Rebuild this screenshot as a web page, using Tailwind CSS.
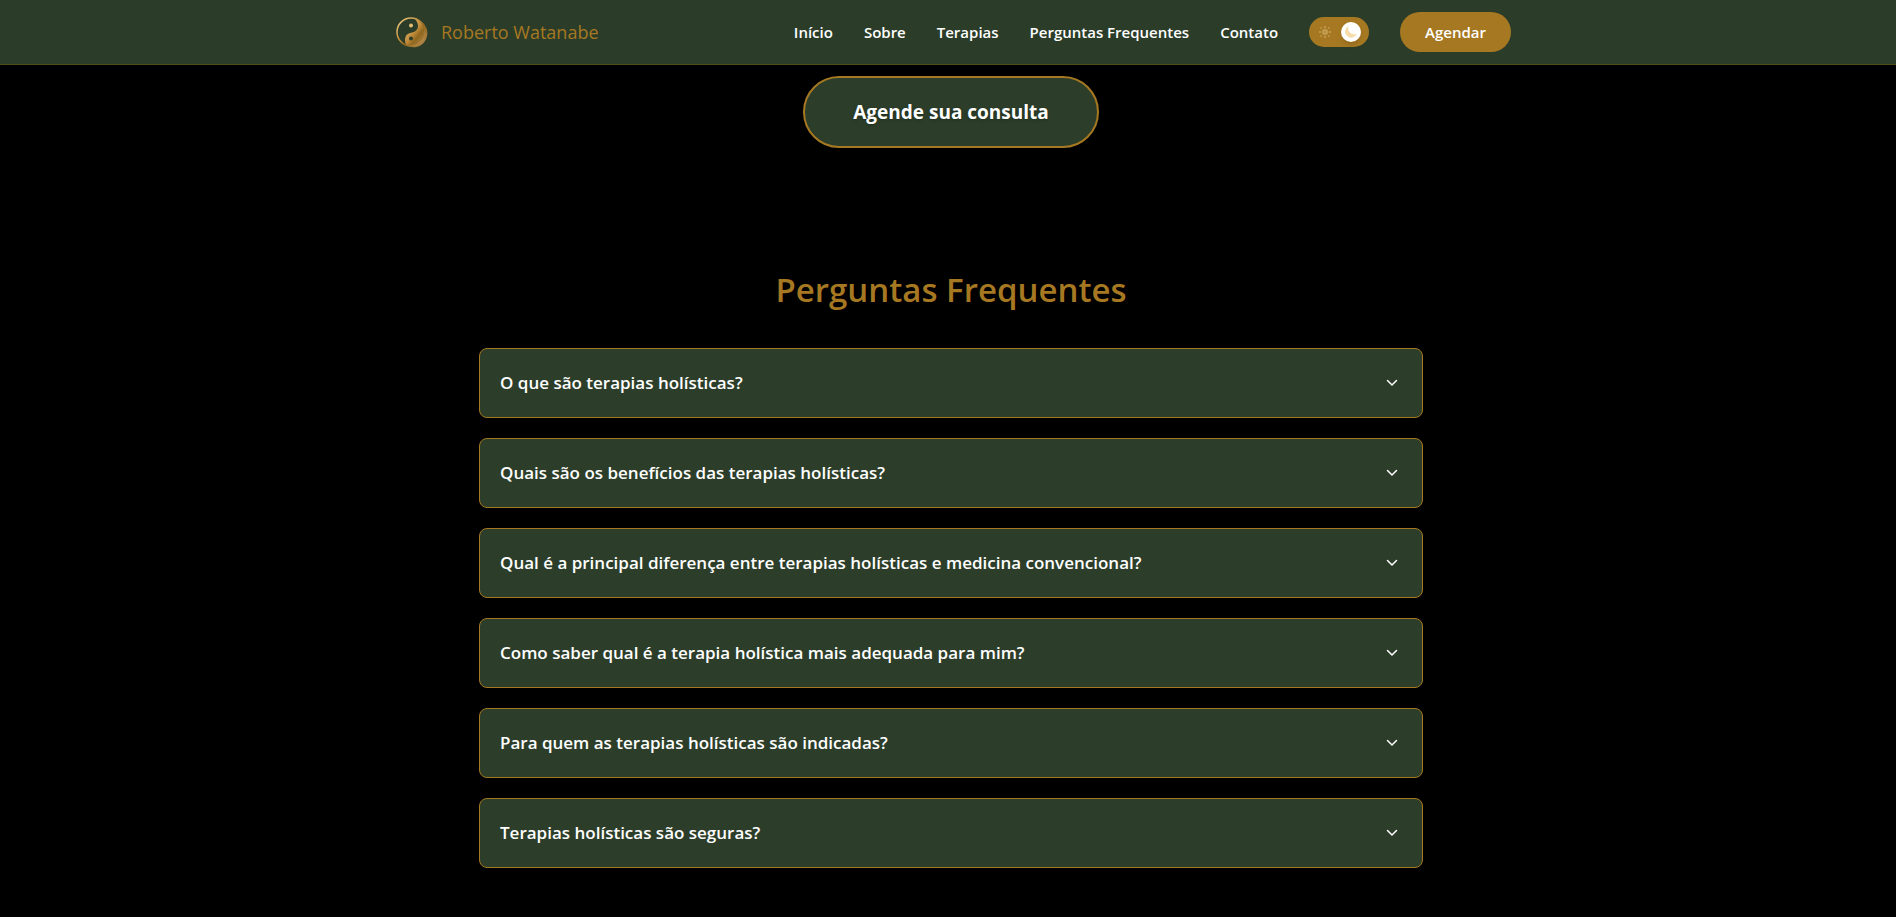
<!DOCTYPE html>
<html lang="pt-BR">
<head>
    <meta charset="UTF-8">
    <meta name="viewport" content="width=device-width, initial-scale=1.0">
    <title>Roberto Watanabe - Terapias Holísticas</title>
    <script src="https://cdn.jsdelivr.net/npm/@tailwindcss/browser@4"></script>
</head>
<body class="bg-black text-white font-['Segoe_UI','Open_Sans',sans-serif] overflow-x-hidden">

    <!-- Cabeçalho -->
    <header class="fixed inset-x-0 top-0 z-10 bg-[#2b3d29] border-b border-[#4f4c1c]">
        <div class="max-w-[1126px] mx-auto h-16 pl-2 flex justify-between items-center">
            <a href="#inicio" class="flex items-center gap-3 text-lg text-[#a67822]">
                <svg class="size-9" viewBox="0 0 36 36" aria-hidden="true">
                    <defs>
                        <linearGradient id="ouro" x1="0" y1="0" x2="1" y2="1">
                            <stop offset="0" stop-color="#f3d48a"/>
                            <stop offset="0.45" stop-color="#c08a38"/>
                            <stop offset="0.6" stop-color="#8f671f"/>
                            <stop offset="1" stop-color="#c4975a"/>
                        </linearGradient>
                    </defs>
                    <!-- a gota dourada ocupa a direita e desce pela base -->
                    <circle cx="18" cy="18" r="14" fill="#2b3d29"/>
                    <path d="M25 6a14 14 0 1 1-12 25.100c-2-5-1-11 4-12.100c6-1 8-4 8-7c0-2-.5-4-3-7z" fill="url(#ouro)"/>
                    <circle cx="18" cy="18" r="14" fill="none" stroke="url(#ouro)" stroke-width="1.500"/>
                    <circle cx="18" cy="11.500" r="2" fill="#e3bd72"/>
                    <circle cx="18" cy="24.500" r="2" fill="#2b3d29"/>
                </svg>
                Roberto Watanabe
            </a>
            <nav class="flex items-center gap-[31px] text-[15px] font-semibold">
                <a href="#inicio">Início</a>
                <a href="#sobre">Sobre</a>
                <a href="#terapias">Terapias</a>
                <a href="#faq">Perguntas Frequentes</a>
                <a href="#contato">Contato</a>
                <button type="button" id="tema" aria-label="Alternar tema" class="w-15 h-[30px] px-2 rounded-full bg-[#a67822] flex items-center justify-between">
                    <svg class="size-4 opacity-30" viewBox="0 0 16 16" fill="#f5dfa8" aria-hidden="true">
                        <circle cx="8" cy="8" r="3.200"/>
                        <path d="M8 2v2M8 12v2M2 8h2M12 8h2M3.500 3.500l1 1M11.500 11.500l1 1M3.500 12.500l1-1M11.500 4.500l1-1" stroke="#f5dfa8" stroke-width="2"/>
                    </svg>
                    <span class="size-5 rounded-full bg-white shadow-md flex items-center justify-center">
                        <svg class="size-3" viewBox="0 0 12 12" fill="#f5dca8" aria-hidden="true">
                            <path d="M3.500 0a6.200 6.200 0 1 0 8.500 8a6.500 6.500 0 0 1-8.500-8z"/>
                        </svg>
                    </span>
                </button>
                <a href="#contato" class="h-10 px-[25px] rounded-full bg-[#a67822] flex items-center">Agendar</a>
            </nav>
        </div>
    </header>

    <main class="pt-[76px] pl-1.5">
        <div class="flex justify-center">
            <a href="#contato" class="h-[72px] px-12 rounded-full border-2 border-[#a67822] bg-[#2c3e2a] flex items-center text-[19px] font-bold text-shadow-md">Agende sua consulta</a>
        </div>

        <!-- Perguntas Frequentes -->
        <section id="faq" class="max-w-[944px] mx-auto pt-[116px] pb-10">
            <h2 class="text-[33px] leading-[52px] font-semibold text-center text-[#a67822] mb-8">Perguntas Frequentes</h2>
            <div id="listaPerguntas" class="flex flex-col gap-5"></div>
        </section>
    </main>

    <script>
        const perguntas = [
            "O que são terapias holísticas?",
            "Quais são os benefícios das terapias holísticas?",
            "Qual é a principal diferença entre terapias holísticas e medicina convencional?",
            "Como saber qual é a terapia holística mais adequada para mim?",
            "Para quem as terapias holísticas são indicadas?",
            "Terapias holísticas são seguras?"
        ];

        const lista = document.getElementById('listaPerguntas');
        perguntas.forEach(pergunta => {
            lista.innerHTML += `
                <button type="button" aria-expanded="false" class="w-full h-[70px] pl-5 pr-6 rounded-lg border border-[#a67822] bg-[#2c3e2a] flex items-center justify-between text-left text-[17px] font-semibold">
                    <span>${pergunta}</span>
                    <svg class="size-3" viewBox="0 0 12 12" fill="none" stroke="currentColor" stroke-width="1.500" stroke-linecap="round" stroke-linejoin="round" aria-hidden="true">
                        <path d="M1.500 3.500l4.500 4.500l4.500-4.500"/>
                    </svg>
                </button>
            `;
        });
    </script>
</body>
</html>
